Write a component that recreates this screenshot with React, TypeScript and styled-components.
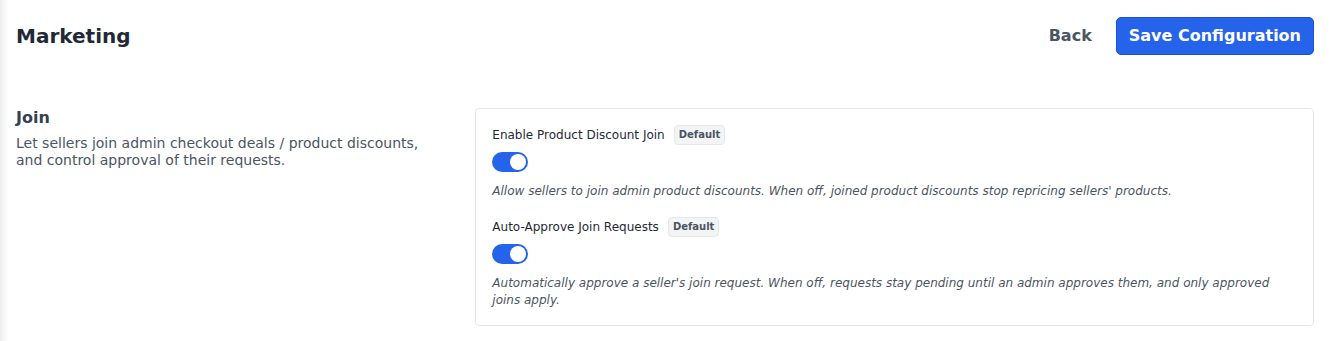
import React, { useState } from "react";
import styled, { createGlobalStyle } from "styled-components";

const Global = createGlobalStyle`
  html, body { margin: 0; padding: 0; background: #ffffff; }
  body { font-family: "DejaVu Sans", "Liberation Sans", sans-serif; color: #1f2937; }
  * { box-sizing: border-box; }
`;

const Page = styled.div`
  min-height: 341px;
  padding: 0 16px;
  background: linear-gradient(to right, #ececec 0px, #f7f7f7 4px, #ffffff 9px);
`;

const Header = styled.header`
  display: flex;
  align-items: center;
  justify-content: space-between;
  height: 72px;
`;

const Title = styled.h1`
  margin: 0;
  font-size: 20px;
  font-weight: 700;
  color: #1f2937;
`;

const Actions = styled.div`
  display: flex;
  align-items: center;
  gap: 12px;
`;

const GhostButton = styled.button`
  font-family: inherit;
  font-size: 16px;
  font-weight: 700;
  color: #4b5563;
  background: transparent;
  border: none;
  padding: 0 12px 1px;
  height: 38px;
  cursor: pointer;
`;

const PrimaryButton = styled.button`
  font-family: inherit;
  font-size: 16px;
  font-weight: 700;
  color: #ffffff;
  background: #2563eb;
  border: 1px solid #1d4ed8;
  border-radius: 5px;
  padding: 0 12px 1px;
  height: 38px;
  cursor: pointer;
`;

const Section = styled.section`
  display: grid;
  grid-template-columns: 1fr 2fr;
  gap: 40px;
  padding-top: 36px;
`;

const SectionInfo = styled.div``;

const SectionTitle = styled.h2`
  margin: 0 0 8px;
  font-size: 16px;
  font-weight: 700;
  color: #374151;
`;

const SectionText = styled.p`
  margin: 0;
  font-size: 14px;
  line-height: 17px;
  color: #4b5563;
`;

const Card = styled.div`
  border: 1px solid #e5e7eb;
  border-radius: 4px;
  padding: 16px;
  display: flex;
  flex-direction: column;
  gap: 17px;
`;

const Field = styled.div`
  display: flex;
  flex-direction: column;
`;

const LabelRow = styled.div`
  display: flex;
  align-items: center;
  gap: 9px;
  height: 20px;
`;

const Label = styled.span`
  font-size: 12px;
  color: #1f2937;
`;

const Badge = styled.span`
  font-size: 10px;
  font-weight: 700;
  color: #4b5563;
  background: #f3f4f6;
  border: 1px solid #e5e7eb;
  border-radius: 4px;
  padding: 0 4px;
  height: 20px;
  line-height: 18px;
`;

const Toggle = styled.button<{ $on: boolean }>`
  position: relative;
  width: 36px;
  height: 20px;
  margin-top: 7px;
  border-radius: 10px;
  border: none;
  padding: 0;
  background: ${(p) => (p.$on ? "#2563eb" : "#d1d5db")};
  cursor: pointer;
`;

const Knob = styled.span<{ $on: boolean }>`
  position: absolute;
  top: 2px;
  left: ${(p) => (p.$on ? "18px" : "2px")};
  width: 16px;
  height: 16px;
  border-radius: 50%;
  background: #ffffff;
`;

const Help = styled.p`
  margin: 7px 0 0;
  font-size: 12px;
  font-style: italic;
  line-height: 17px;
  color: #4b5563;
`;

const fields = [
  {
    label: "Enable Product Discount Join",
    help: "Allow sellers to join admin product discounts. When off, joined product discounts stop repricing sellers' products.",
  },
  {
    label: "Auto-Approve Join Requests",
    help: "Automatically approve a seller's join request. When off, requests stay pending until an admin approves them, and only approved joins apply.",
  },
];

function ToggleField({ label, help }: { label: string; help: string }) {
  const [on, setOn] = useState(true);
  return (
    <Field>
      <LabelRow>
        <Label>{label}</Label>
        <Badge>Default</Badge>
      </LabelRow>
      <div>
        <Toggle $on={on} onClick={() => setOn(!on)} aria-pressed={on}>
          <Knob $on={on} />
        </Toggle>
      </div>
      <Help>{help}</Help>
    </Field>
  );
}

export default function App() {
  return (
    <>
      <Global />
      <Page>
        <Header>
          <Title>Marketing</Title>
          <Actions>
            <GhostButton>Back</GhostButton>
            <PrimaryButton>Save Configuration</PrimaryButton>
          </Actions>
        </Header>
        <Section>
          <SectionInfo>
            <SectionTitle>Join</SectionTitle>
            <SectionText>
              Let sellers join admin checkout deals / product discounts, and control approval of their requests.
            </SectionText>
          </SectionInfo>
          <Card>
            {fields.map((f) => (
              <ToggleField key={f.label} label={f.label} help={f.help} />
            ))}
          </Card>
        </Section>
      </Page>
    </>
  );
}
